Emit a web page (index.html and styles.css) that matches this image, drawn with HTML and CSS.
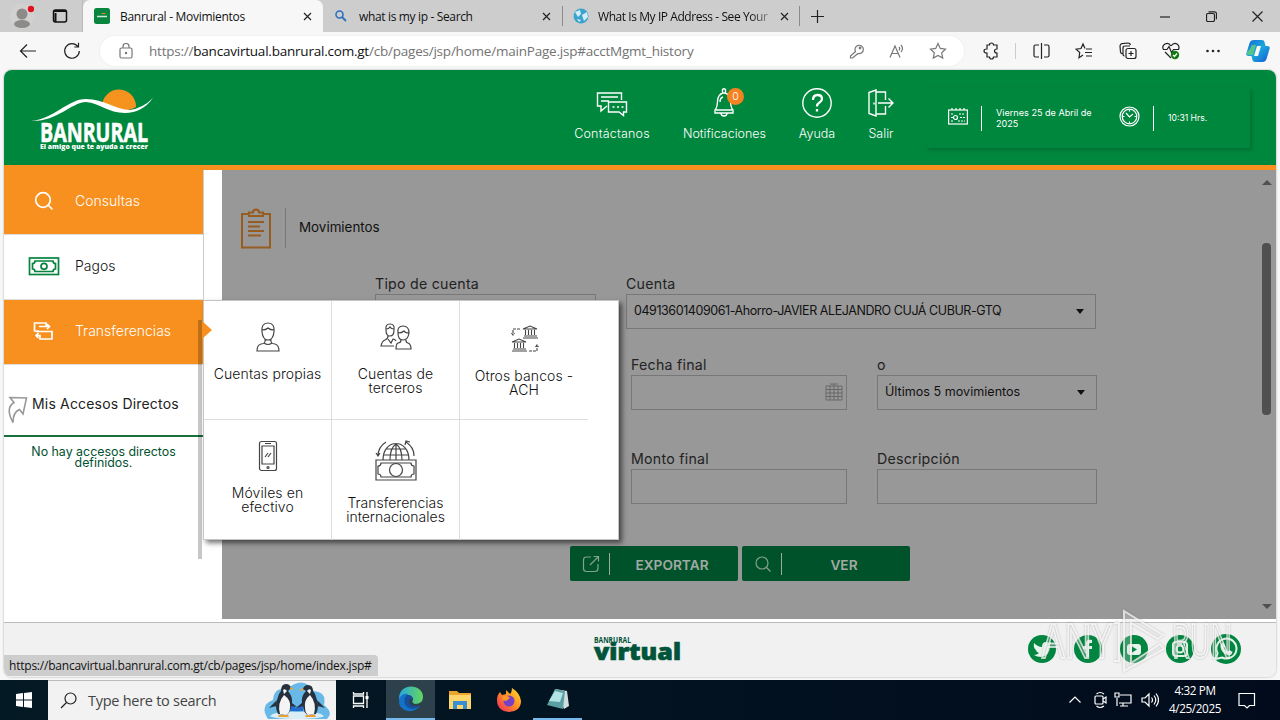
FILE: index.html
```html
<!DOCTYPE html>
<html lang="es">
<head>
    <meta charset="UTF-8">
    <meta name="viewport" content="width=device-width, initial-scale=1.0">
    <title>Banrural - Movimientos</title>
    <link rel="stylesheet" href="styles.css">
</head>
<body>
    <!-- Browser tabs -->
    <div class="tab-strip">
        <div class="tab-tools">
            <svg width="24" height="28" viewBox="0 0 24 28"><circle cx="12" cy="14" r="12" fill="#d3d1cf"/><circle cx="12" cy="12" r="5.5" fill="#8d8b89"/><ellipse cx="12" cy="22" rx="8" ry="4" fill="#8d8b89"/><circle cx="21" cy="7" r="3.2" fill="#e0101c"/></svg>
            <svg width="16" height="16" viewBox="0 0 16 16"><rect x="1.5" y="2" width="13" height="12" rx="2" fill="none" stroke="#111" stroke-width="1.5"/><path d="M2 3h12M3.500 5v9" stroke="#111" stroke-width="2"/></svg>
        </div>
        <div class="tab active">
            <svg width="16" height="16" viewBox="0 0 16 16"><rect width="16" height="16" rx="2.500" fill="#0a8540"/><path d="M7 6a3 2 0 0 1 5 0" fill="#f6921e"/><path d="M3 8.500h10" stroke="#cfe9d9" stroke-width="1.500"/></svg>
            <span class="tab-title">Banrural - Movimientos</span>
            <svg class="close" width="9" height="9" viewBox="0 0 9 9"><path d="M1 1l7 7M8 1l-7 7"/></svg>
        </div>
        <div class="tab second">
            <svg width="16" height="16" viewBox="0 0 16 16"><circle cx="6.500" cy="6.500" r="3.500" fill="none" stroke="#2b6fc0" stroke-width="1.600"/><path d="M9 9l4 4" stroke="#2b6fc0" stroke-width="1.800"/></svg>
            <span class="tab-title">what is my ip - Search</span>
            <svg class="close" width="9" height="9" viewBox="0 0 9 9"><path d="M1 1l7 7M8 1l-7 7"/></svg>
        </div>
        <div class="tab third">
            <svg width="16" height="16" viewBox="0 0 16 16"><circle cx="8" cy="8" r="7.500" fill="#3ba4cc"/><path d="M2 4l5-2 1 4-3 3zM9 7l5-3 1 5-4 4zM4 11l4 1-2 2z" fill="#d5eef5"/></svg>
            <span class="tab-title">What Is My IP Address - See Your</span>
            <svg class="close" width="9" height="9" viewBox="0 0 9 9"><path d="M1 1l7 7M8 1l-7 7"/></svg>
        </div>
        <svg class="new-tab" width="15" height="15" viewBox="0 0 15 15"><path d="M7.500 1v13M1 7.500h13"/></svg>
        <div class="window-buttons">
            <svg width="11" height="11" viewBox="0 0 11 11"><path d="M0 6h10"/></svg>
            <svg width="11" height="11" viewBox="0 0 11 11"><rect x=".5" y="2.500" width="8" height="8" rx="1.500"/><path d="M2.500 .8h6q2 0 2 2v5.500"/></svg>
            <svg width="11" height="11" viewBox="0 0 11 11"><path d="M.5.5l10 10M10.500.5l-10 10"/></svg>
        </div>
    </div>

    <!-- Address bar -->
    <div class="toolbar">
        <svg class="back" width="18" height="18" viewBox="0 0 18 18"><path d="M17 9H2M8 2.500L1.500 9 8 15.500"/></svg>
        <svg class="reload" width="18" height="18" viewBox="0 0 18 18"><path d="M14.800 4.500A7.300 7.300 0 1 0 16.300 9M15.500 .8v4.200h-4.200"/></svg>
        <div class="address">
            <svg width="14" height="16" viewBox="0 0 14 16"><rect x="1" y="5" width="12" height="10" rx="1.500"/><path d="M4 5V3.500a3 3 0 0 1 6 0V5"/><circle cx="7" cy="10" r=".6"/></svg>
            <span class="url">https://<b>bancavirtual.banrural.com.gt</b>/cb/pages/jsp/home/mainPage.jsp#acctMgmt_history</span>
            <div class="address-icons">
                <svg width="16" height="16" viewBox="0 0 16 16"><path d="M6.500 8.500A4.200 4.200 0 1 1 9 10.500L3.500 15H1.500v-2z"/><circle cx="11" cy="5" r=".8"/></svg>
                <svg width="16" height="16" viewBox="0 0 16 16"><path d="M1 14.500L6 3l5 11.500M2.800 10.500h6.400M10 4q1.500 1.500 0 3.500M12 2q3 3.500 0 7"/></svg>
                <svg width="18" height="18" viewBox="0 0 18 18"><path d="M9 1.500l2.300 4.900 5.200.7-3.800 3.700 1 5.300L9 13.500l-4.700 2.600 1-5.300L1.500 7.100l5.200-.7z"/></svg>
            </div>
        </div>
        <div class="tools">
            <svg width="17" height="18" viewBox="0 0 17 18"><path d="M4 3h2.500q0-2 2-2t2 2H14v4q-2.500 0-2.500 2t2.500 2v4h-3.500q0 2-2 2t-2-2H4v-4q-3 0-3-2t3-2z"/></svg>
            <span class="tool-line"></span>
            <svg width="17" height="16" viewBox="0 0 17 16"><path d="M6 2H2.500q-1.500 0-1.500 1.500v9Q1 14 2.500 14H6M11 2h3.500q1.500 0 1.500 1.500v9q0 1.500-1.500 1.500H11M8.500 0v16"/></svg>
            <svg width="18" height="18" viewBox="0 0 18 18"><path d="M10 6.500L8 2 6 6.500l-5 .7L4.700 10.500 4 15.700 8 13M11 7h6M10 10.500h7M11 14h6"/></svg>
            <svg width="18" height="18" viewBox="0 0 18 18"><path d="M4 12q-2 0-2.500-2L1 4q0-2 2-2.300l6-.7q2 0 2.500 2M5.500 14q-1.500 0-1.500-2V6q0-2 2-2h5"/><rect x="7" y="6.500" width="10" height="10" rx="2"/><path d="M12 9v5M9.500 11.500h5"/></svg>
            <svg width="18" height="18" viewBox="0 0 18 18"><path d="M9 4Q6.500 0 3 2T1.500 7.500H5l2-3 2.500 6 2-3h5Q18 4 15 2T9 4M3 10l6 6"/><circle cx="13" cy="13" r="4.200" fill="#107c10" stroke="none"/><path d="M11 13l1.500 1.500L15 11.500" stroke="#fff"/></svg>
            <svg width="16" height="16" viewBox="0 0 16 16"><g fill="#222" stroke="none"><circle cx="2.500" cy="8" r="1.300"/><circle cx="8" cy="8" r="1.300"/><circle cx="13.500" cy="8" r="1.300"/></g></svg>
            <svg width="24" height="24" viewBox="0 0 24 24"><defs><linearGradient id="cop" x2="1" y2="1"><stop stop-color="#1768d8"/><stop offset=".5" stop-color="#1aa8dc"/><stop offset="1" stop-color="#1a56d6"/></linearGradient></defs><path d="M8 1h8q2 0 2.500 2l1 4h2q3 0 2 3l-3 10q-1 3-4 3H9q-2 0-2.500-2l-1-4h-3q-3 0-2-3l3-10Q4.500 1 8 1z" fill="url(#cop)" stroke="none"/><path d="M4 10l2-4h4l-3 10H3q-3 0-2-3z" fill="#54c58a" stroke="none"/><path d="M11 7h4l-3 10H8z" fill="#f7f7f7" stroke="none"/></svg>
        </div>
    </div>

    <!-- Bank page -->
    <div class="page">
        <header>
            <svg class="logo" width="124" height="64" viewBox="0 0 124 64">
                <path d="M71 17a17 17 0 0 1 34 1q-15 8-34-1z" fill="#f6921e"/>
                <path d="M0 32C23 30 37 10 55 10s30 11 44 11q13-2 23-12-11 15-28 15C77 24 69 14 55 13 39 14 26 33 0 32z" fill="#fff"/>
                <text x="9" y="53" class="logo-name" textLength="108" lengthAdjust="spacingAndGlyphs">BANRURAL</text>
                <text x="9" y="60" class="logo-slogan" textLength="108" lengthAdjust="spacingAndGlyphs">El amigo que te ayuda a crecer</text>
            </svg>
            <nav>
                <a class="contact">
                    <svg width="32" height="30" viewBox="0 0 32 30"><path d="M11 18l-6 5v-5H1.500V5h24v7M5 9h17M5 13h8"/><path d="M12.500 14h18v10h-3v3.500L23 24H12.500z"/><path d="M16.500 19h2M21 19h2M25.500 19h2"/></svg>
                    <span>Contáctanos</span>
                </a>
                <a class="notif">
                    <svg width="24" height="30" viewBox="0 0 24 30"><path d="M10.500 5V1.500q1.500-1.500 3 0V5M3 22c3-3 2-8 3-12q2-5 6-5t6 5c1 4 0 9 3 12v3H3zM4 22h16M8 14q0-4 3-5M9 25q0 3 3 3t3-3"/></svg>
                    <span>Notificaciones</span>
                    <em class="badge">0</em>
                </a>
                <a class="help">
                    <svg width="30" height="30" viewBox="0 0 30 30"><circle cx="15" cy="15" r="14.200"/><path d="M11 12q0-5 4.500-5t4.500 4q0 2-2.500 3.500T15 18.500M15 21v2.500" stroke-width="2.300"/></svg>
                    <span>Ayuda</span>
                </a>
                <a class="exit">
                    <svg width="26" height="30" viewBox="0 0 26 30"><path d="M1 4.500l7-2.500v26l-7-2.500zM8 4h9.500v8M17.500 18v8H8M6 14.500v2M10 15h15M20.500 10.500L25 15l-4.500 4.500"/></svg>
                    <span>Salir</span>
                </a>
            </nav>
            <div class="datetime">
                <svg width="20" height="17" viewBox="0 0 20 17"><rect x=".6" y="2" width="18.800" height="14"/><path d="M4 0v3M8 0v3M12 0v3M16 0v3M3 6h3M11 6h6M3 9.500h2M12 9.500h5M3 13h3M10 13h7" stroke-dasharray="2 1"/><circle cx="7.500" cy="9.500" r="2"/></svg>
                <p class="date">Viernes 25 de Abril de 2025</p>
                <svg width="21" height="21" viewBox="0 0 21 21"><circle cx="10.500" cy="10.500" r="9.500"/><circle cx="10.500" cy="10.500" r="7.300"/><path d="M7 7l3.500 4L14 8M10.500 3.500v2M10.500 15.500v2M3.500 10.500h2M15.500 10.500h2"/></svg>
                <p class="time">10:31 Hrs.</p>
            </div>
        </header>

        <div class="content">
            <aside>
                <a class="menu-item on">
                    <svg width="32" height="24" viewBox="0 0 32 24"><circle cx="15" cy="12" r="7.300"/><path d="M20.500 17.500l4 4"/></svg>
                    Consultas
                </a>
                <a class="menu-item pay">
                    <svg width="32" height="24" viewBox="0 0 32 24"><rect x="1.500" y="5" width="29" height="16.500"/><path d="M7 8h18q0 2.500 2.500 2.500v5.500Q25 16 25 18.500H7Q7 16 4.500 16v-5.500Q7 10.500 7 8z"/><circle cx="16" cy="13.300" r="3"/></svg>
                    Pagos
                </a>
                <a class="menu-item on">
                    <svg width="32" height="24" viewBox="0 0 32 24"><path d="M11 13H6.500V5H18v3h3.500M19 6l2.500 2.500L19 11M11 8.500h11M20 13.500h4V21H12v-3.500H8M10.500 15L8 17.500l2.500 2.500M8 13.500h12"/></svg>
                    Transferencias
                </a>
                <div class="shortcuts">
                    <svg width="22" height="28" viewBox="0 0 22 28"><path d="M4 1.500L20.500 2 17 18l-3.500-4.500Q7 16 7 26.500-1 12 8 6.500z"/></svg>
                    <span>Mis Accesos Directos</span>
                </div>
                <p class="no-shortcuts">No hay accesos directos definidos.</p>
                <div class="side-scroll"></div>
            </aside>

            <section class="panel">
                <h1>
                    <svg width="32" height="41" viewBox="0 0 32 41"><path d="M9 6H2v33.500h28V6h-7M9 4.500h4q0-3 3-3t3 3h4V8H9zM8 14h16M8 18.500h12M8 23h16M8 27.500h13"/></svg>
                    <span>Movimientos</span>
                </h1>
                <form>
                    <div class="row first">
                        <div class="field type"><label>Tipo de cuenta</label><div class="box"></div></div>
                        <div class="field account"><label>Cuenta</label><div class="box select">04913601409061-Ahorro-JAVIER ALEJANDRO CUJÁ CUBUR-GTQ</div></div>
                    </div>
                    <div class="row">
                        <div class="field"><label>Fecha final</label>
                            <div class="box">
                                <svg class="calendar" width="18" height="18" viewBox="0 0 18 18"><path d="M1 3h16v14H1zM1 6.500h16M1 10h16M1 13.500h16M5 3v14M9 1v16M13 3v14M5 1h8"/></svg>
                            </div>
                        </div>
                        <div class="field wide"><label>o</label><div class="box select">Últimos 5 movimientos</div></div>
                    </div>
                    <div class="row last">
                        <div class="field"><label>Monto final</label><div class="box"></div></div>
                        <div class="field wide"><label>Descripción</label><div class="box"></div></div>
                    </div>
                    <div class="actions">
                        <button type="button"><svg width="18" height="18" viewBox="0 0 18 18"><path d="M9 2H4.500Q1.500 2 1.500 5v8.500q0 3 3 3H13q3 0 3-3V9M8 10l8-8M11.500 1.500H16.500V6.500"/></svg><span>EXPORTAR</span></button>
                        <button type="button"><svg width="18" height="18" viewBox="0 0 18 18"><circle cx="8" cy="8" r="6"/><path d="M12.500 12.500l4 4"/></svg><span>VER</span></button>
                    </div>
                </form>
                <div class="scrollbar"><i class="up"></i><i class="thumb"></i><i class="down"></i></div>
            </section>

            <div class="submenu">
                <a>
                    <svg width="28" height="32" viewBox="0 0 28 32"><path d="M8 11q-1-9 6-9t6 9q-1 8-6 8t-6-8zM8 9q4 0 6-2 2 2 6 2M11 18q1 5-4 5-4 1-4 7h22q0-6-4-7-5 0-4-5M10 22q4 3 8 0"/></svg>
                    <span>Cuentas propias</span>
                </a>
                <a>
                    <svg width="32" height="32" viewBox="0 0 32 32"><path d="M6 9q-1-6 4-6t4 6q0 6-4 6t-4-6zM6 8q3 0 4-2 1 2 4 2M8 15q0 3-3 4-3 1-4 6h13M8 18l3 4 2-4q2 0 3 2M18 12q-1-7 5-7t6 7q-1 7-6 7t-5-7zM18 12q4 0 6-2 1 2 5 2M21 19q0 3-3 3-2 1-2 6h15q0-5-3-6-2 0-2-3"/></svg>
                    <span>Cuentas de<br>terceros</span>
                </a>
                <a class="banks">
                    <svg width="32" height="32" viewBox="0 0 32 32"><path d="M15 6l7-3 7 3zM15 15h15M16 13h13M17.500 7v5M20.500 7v5M23.500 7v5M26.500 7v5M4 19l7-3 7 3zM4 28h15M5 26h13M6.500 20v5M9.500 20v5M12.500 20v5M15.500 20v5"/><path d="M12 6H5v6M3.500 10L5 12l1.500-2M21 28h8v-6M27.500 24l1.500-2 1.500 2" stroke-dasharray="3 1"/></svg>
                    <span>Otros bancos -<br>ACH</span>
                </a>
                <a>
                    <svg width="20" height="32" viewBox="0 0 20 32"><rect x="1.500" y="1.500" width="17" height="29" rx="2"/><path d="M4 6h12v18H4zM7 3.500h6M7 17l3-4M10 17l3-4"/><circle cx="10" cy="27.500" r="1"/></svg>
                    <span>Móviles en<br>efectivo</span>
                </a>
                <a class="world">
                    <svg width="42" height="42" viewBox="0 0 42 42"><path d="M1 20h40v20H1zM6 23h30q0 3 3 3v8q-3 0-3 3H6q0-3-3-3v-8q3 0 3-3zM8 20C8-2 34-2 34 20M21 3v17M15 20q0-12 6-16 6 4 6 16M8 15h26M11 9h20M11 2Q3 7 3 16M1 13l2 3 2-3M31 2q8 5 8 14M30 5l1-4 4 1"/><circle cx="21" cy="30" r="6.500"/></svg>
                    <span>Transferencias<br>internacionales</span>
                </a>
                <a class="empty"></a>
            </div>
        </div>

        <footer>
            <svg class="virtual" width="90" height="28" viewBox="0 0 90 28">
                <text x="1" y="7" class="virtual-top" textLength="37" lengthAdjust="spacingAndGlyphs">BANRURAL</text>
                <text x="1" y="24" class="virtual-name" textLength="87" lengthAdjust="spacingAndGlyphs">virtual</text>
            </svg>
            <div class="social">
                <svg viewBox="0 0 30 30"><circle cx="15" cy="15" r="14"/><path d="M7 9q4 4 8 4 0-5 4-5 2 0 3 1l2-1-1 3q0 11-9 12-4 0-7-2 3 0 5-2-3-1-3-3-3-2-2-7z" class="glyph"/></svg>
                <svg viewBox="0 0 30 30"><circle cx="15" cy="15" r="14"/><path d="M13 23v-8h-3v-3h3c-1-6 2-7 6-6v3c-3 0-3 0-3 3h3v3h-3v8z" class="glyph"/></svg>
                <svg viewBox="0 0 30 30"><circle cx="15" cy="15" r="14"/><rect x="8" y="10" width="14" height="11" rx="3" class="glyph"/><path d="M13 12.500v6l5-3z"/></svg>
                <svg viewBox="0 0 30 30"><circle cx="15" cy="15" r="14"/><g class="ring"><rect x="8" y="8" width="14" height="14" rx="3"/><circle cx="15" cy="15" r="3.500"/><path d="M19 10.500h1"/></g></svg>
                <svg viewBox="0 0 30 30" class="whatsapp"><circle cx="15" cy="15" r="15"/><path d="M5 25l1.500-6A10 10 0 1 1 11 23.500z" class="ring"/><path d="M10.500 9.500l2-1 2 4-1.500 1.500q1 2.500 4 3.500l1.500-1.500 3 2q-1 4-5 3-6-2-7-8-.5-2 1-3.500z" class="glyph"/></svg>
            </div>
        </footer>
        <div class="status">https://bancavirtual.banrural.com.gt/cb/pages/jsp/home/index.jsp#</div>
    </div>

    <svg class="watermark" width="200" height="64" viewBox="0 0 200 64">
        <text x="1" y="49" textLength="70" lengthAdjust="spacingAndGlyphs">ANY</text>
        <path d="M73 14h5v38h-5M83 2l39 24-5 4-27-16v40l29-19 4 5-40 22z"/>
        <text x="131" y="49" textLength="60" lengthAdjust="spacingAndGlyphs">RUN</text>
    </svg>

    <!-- Windows taskbar -->
    <div class="taskbar">
        <div class="start"><svg width="16" height="16" viewBox="0 0 16 16"><path d="M0 2l7-1v6.500H0zM8 .9L16 0v7.500H8zM0 8.500h7V15l-7-1zM8 8.500h8V16l-8-1z" fill="#fff"/></svg></div>
        <div class="search">
            <svg width="17" height="17" viewBox="0 0 17 17"><circle cx="10.500" cy="6.500" r="5.500"/><path d="M6.500 10.500L1 16"/></svg>
            <span>Type here to search</span>
            <svg class="penguins" width="68" height="38" viewBox="0 0 68 38">
                <path d="M5 37Q-4 23 10 18 11 5 24 7 40-7 51 9q13 1 10 14 10 8 3 14z" fill="#69b9e8"/>
                <path d="M7 34q5-5 27-4 21-1 27 4-4 3-27 3T7 34z" fill="#d9edf7"/>
                <path d="M27 20l6 6 7-6v9H27z" fill="#246bcb"/>
                <path d="M15 32Q11 24 15 15q1-4 3-6 0-7 5-7 4 0 5 4l-3 3q5 6 4 12l5 4-6-1q-1 8-5 9zM14 18l-8 8 7-2zM53 32q4-8 0-17-1-4-3-6 0-6-5-6-4 0-5 4l3 2q-5 5-4 12l-6 5 7-2q1 8 5 9zM54 18l8 8-7-2z" fill="#26313e"/>
                <path d="M17 32q-3-11 4-19 7 5 6 12 0 6-4 8zM51 32q3-11-4-19-6 5-5 12 0 6 3 8zM20 8q2-2 4 1l-3 3zM48 8q-2-2-4 1l3 3z" fill="#f4f4f4"/>
                <path d="M27 5l4 2-4 1zM40 6l-4 2 4 1zM16 33h9l1 2H15zM43 33h9l1 2H42z" fill="#ee9f32"/>
            </svg>
        </div>
        <div class="task-app"><svg width="18" height="18" viewBox="0 0 18 18" fill="none" stroke="#fff" stroke-width="1.300"><path d="M1.500 5h10v7.500h-10zM1.500 1v2h10V1M1.500 17v-2h10v2M15 1v16"/><path d="M15 5v3" stroke-width="3"/></svg></div>
        <div class="task-app current">
            <svg width="26" height="26" viewBox="0 0 26 26"><defs><linearGradient id="edge" x2="1"><stop stop-color="#2aa5df"/><stop offset="1" stop-color="#64d85c"/></linearGradient></defs><path d="M1 12C2-4 25-2 25 11q0 7-8 7-4-1-2-4 0-5-6-5-5 0-8 5z" fill="url(#edge)"/><path d="M1 13q3-6 9-5-4 4-1 9 4 6 13 3-5 6-12 5Q0 23 1 13z" fill="#1473c9"/><path d="M9 9q5 0 6 4-4-1-4 3 2 6 11 4-8 6-14 0-4-6 1-11z" fill="#164f9e"/></svg>
        </div>
        <div class="task-app"><svg width="24" height="22" viewBox="0 0 24 22"><path d="M1 2h8l2 2h12v16H1z" fill="#e9a52c"/><path d="M1 6h22v14H1z" fill="#fdd66b"/><path d="M5 20v-8h14v8h-4v-4H9v4z" fill="#3a8fd1"/></svg></div>
        <div class="task-app"><svg width="26" height="26" viewBox="0 0 26 26"><defs><linearGradient id="fox" x1="1" x2="0" y2="1"><stop stop-color="#ffe32e"/><stop offset=".5" stop-color="#ff8a25"/><stop offset="1" stop-color="#ee2368"/></linearGradient></defs><path d="M4 5l2 3 4-1V3l4 4q2-2 2-6 8 5 9 13 0 10-12 11Q1 24 1 13q0-5 3-8z" fill="url(#fox)"/><circle cx="13" cy="14" r="5.500" fill="#7841c5"/><path d="M7 9q5-1 7 2l-4 3-4-1z" fill="#ff9629"/></svg></div>
        <div class="task-app opened"><svg width="24" height="24" viewBox="0 0 24 24"><path d="M9 2l12 2 2 15-5 3z" fill="#d2dede"/><path d="M9 2l10 2-2 18-16-4z" fill="#5b9fa5"/><path d="M9 4l8 2-3 9-11-1z" fill="#b4e3e6"/></svg></div>
        <div class="tray">
            <svg width="14" height="14" viewBox="0 0 14 14"><path d="M1.500 9.500L7 4l5.500 5.500"/></svg>
            <svg width="14" height="18" viewBox="0 0 14 18"><rect x="1" y="5" width="8" height="8" rx="1"/><path d="M9 8l3-2v6l-3-2M2.500 3Q6 0 10 3M2.500 15q3.500 3 7.500 0"/></svg>
            <svg width="18" height="16" viewBox="0 0 18 16"><path d="M6 3h11v8H5M9 11v3M6 14h8M3 6v8M1 1h4v4H1z"/></svg>
            <svg width="18" height="16" viewBox="0 0 18 16"><path d="M1 6h3l4-4v12l-4-4H1zM10.500 5.500q2 2.500 0 5M13 3.500q3.500 4.500 0 9M15 1.500q5 6.500 0 13"/></svg>
        </div>
        <div class="clock">4:32 PM<br>4/25/2025</div>
        <svg class="notice" width="18" height="18" viewBox="0 0 18 18"><path d="M1 1.500h15.500v12h-5L9 16l-2.500-2.500H1z"/></svg>
    </div>
</body>
</html>
```
FILE: styles.css
```css
* {
    margin: 0;
    padding: 0;
    box-sizing: border-box;
}
body {
    width: 1280px;
    height: 720px;
    overflow: hidden;
    position: relative;
    background: #f7f7f7;
    font-family: "Open Sans", "Noto Sans", sans-serif;
    font-size: 12px;
    color: #111;
}
svg {
    flex: none;
    display: block;
}

/* Browser */
.tab-strip {
    height: 32px;
    display: flex;
    align-items: center;
    background: #cdcdcd;
}
.tab-tools {
    width: 83px;
    height: 32px;
    display: flex;
    align-items: center;
    gap: 18px;
    padding-left: 10px;
    border-right: 1px solid #bbb;
}
.tab {
    width: 240px;
    height: 32px;
    display: flex;
    align-items: center;
    padding: 0 11px;
}
.tab.active {
    background: #f7f7f7;
    border-radius: 7px 7px 0 0;
}
.tab.second {
    padding: 0 12px 0 10px;
}
.tab.third {
    width: 238px;
    border-left: 1px solid #8b8b8b;
    border-right: 1px solid #8b8b8b;
    margin-left: -1px;
    height: 20px;
    padding: 0 10px;
}
.tab-title {
    flex: 1;
    margin: 0 16px 0 10px;
    white-space: nowrap;
    letter-spacing: -0.29px;
}
.second .tab-title {
    letter-spacing: -.35px;
}
.third .tab-title {
    margin: 0 10px 0 9px;
    letter-spacing: -.43px;
    mask-image: linear-gradient(90deg, #000 88%, rgba(0, 0, 0, .3));
}
.close, .new-tab, .window-buttons svg {
    fill: none;
    stroke: #222;
    stroke-width: 1.2;
}
.new-tab {
    margin-left: 10px;
}
.window-buttons {
    display: flex;
    gap: 35px;
    margin-left: auto;
    padding-right: 17px;
}
.toolbar {
    height: 38px;
    display: flex;
    align-items: center;
    padding-left: 19px;
}
.toolbar svg {
    fill: none;
    stroke: #222;
    stroke-width: 1.2;
}
.reload {
    margin: 0 19px 0 26px;
}
.address {
    width: 864px;
    height: 30px;
    display: flex;
    align-items: center;
    background: #fff;
    border-radius: 15px;
    padding: 0 17px 0 19px;
    box-shadow: 0 0 1px 1px #f1f1f1;
}
.toolbar .address svg {
    stroke: #777;
}
.url {
    margin-left: 16px;
    color: #737373;
    font-size: 13.5px;
    letter-spacing: -.22px;
    white-space: nowrap;
}
.url b {
    color: #111;
    font-weight: 400;
}
.address-icons {
    margin-left: auto;
    display: flex;
    align-items: center;
    gap: 24px;
}
.tools {
    display: flex;
    align-items: center;
    flex: 1;
    justify-content: space-between;
    padding: 0 10px 0 19px;
}
.tool-line {
    width: 1px;
    height: 16px;
    margin: 0 -8px 0 -10px;
    background: #ccc;
}

/* Page header */
.page {
    position: relative;
    width: 1272px;
    height: 607px;
    margin-left: 4px;
    border-radius: 8px;
    overflow: hidden;
    background: #fff;
    font-family: Inter, "Open Sans", sans-serif;
    box-shadow: 0 0 2px #999;
}
header {
    height: 100px;
    background: #00873e;
    border-bottom: 5px solid #f7901e;
    display: flex;
    align-items: flex-start;
}
.logo {
    margin: 19px 0 0 27px;
}
.logo text {
    fill: #fff;
}
.logo-name {
    font: bold 26px "Open Sans";
    stroke: #fff;
    stroke-width: .6;
}
.logo-slogan {
    font: 800 7.5px "Open Sans";
}
nav {
    display: flex;
    gap: 33px;
    margin: 18px 0 0 419px;
}
nav a {
    display: flex;
    flex-direction: column;
    align-items: center;
    position: relative;
    color: #fff;
    font-size: 12.5px;
    font-weight: 300;
    line-height: 18px;
}
nav a svg, .datetime svg {
    fill: none;
    stroke: #fff;
    stroke-width: 1.4;
}
nav a span {
    margin-top: 7px;
}
.contact {
    width: 76px;
    letter-spacing: .2px;
}
.notif {
    width: 83px;
}
.notif svg {
    margin-left: -2px;
}
.help {
    width: 36px;
}
.help svg {
    margin-left: -1px;
}
.exit {
    width: 26px;
}
.badge {
    position: absolute;
    left: 44px;
    top: 0;
    width: 17px;
    height: 17px;
    border-radius: 50%;
    background: #f58220;
    font-size: 10.5px;
    font-style: normal;
    line-height: 17px;
    text-align: center;
}
.datetime {
    width: 324px;
    height: 60px;
    margin: 18px 0 0 32px;
    display: flex;
    align-items: center;
    padding-left: 22px;
    box-shadow: 2px 2px 4px #006f32;
    color: #fff;
    line-height: 11px;
}
.datetime svg {
    margin-top: -3px;
    stroke-width: 1.2;
}
.datetime p {
    height: 25px;
    display: flex;
    align-items: center;
    border-left: 1px solid #fff;
    margin-left: 13px;
    padding-left: 14px;
}
.datetime .date {
    width: 126px;
    margin-right: 12px;
    font-size: 9.1px;
}
.datetime .time {
    font-size: 8.6px;
}

/* Side menu */
.content {
    position: relative;
    height: 449px;
    display: flex;
}
aside {
    position: relative;
    width: 200px;
    border-right: 1px solid #ccc;
    height: 370px;
}
.menu-item {
    height: 65px;
    display: flex;
    align-items: center;
    gap: 15px;
    padding: 0 0 4px 24px;
    border-bottom: 1px solid #ddd;
    font-size: 14px;
    font-weight: 300;
}
.menu-item svg {
    fill: none;
    stroke: #fff;
    stroke-width: 1.7;
}
.menu-item.on {
    background: #f7901e;
    color: #fff;
}
.menu-item.pay svg {
    stroke: #07833d;
}
.shortcuts {
    height: 72px;
    display: flex;
    align-items: center;
    gap: 4px;
    padding: 6px 0 0 2px;
    border-bottom: 2px solid #18713d;
    font-size: 14px;
    letter-spacing: .18px;
    color: #222;
    white-space: nowrap;
}
.shortcuts svg {
    margin-top: 14px;
    fill: none;
    stroke: #999;
    stroke-width: 1.6;
}
.no-shortcuts {
    padding: 9px 20px 0;
    text-align: center;
    font-size: 12.4px;
    line-height: 11px;
    color: #00522e;
}
.side-scroll {
    position: absolute;
    right: 1px;
    top: 150px;
    width: 4px;
    height: 239px;
    background: rgba(0, 0, 0, .22);
}

/* Account form */
.panel {
    position: relative;
    width: 1054px;
    height: 449px;
    margin-left: 18px;
    background: #989898;
    padding-top: 38px;
}
h1 {
    height: 40px;
    display: flex;
    padding-left: 19px;
    font-size: 13.4px;
    font-weight: 400;
    line-height: 38px;
}
h1 span {
    margin-left: 12px;
    padding-left: 13px;
    border-left: 1px solid #777;
}
h1 svg {
    margin-left: -1px;
    margin-right: 1px;
    fill: none;
    stroke: #965c20;
    stroke-width: 2;
}
.row {
    display: flex;
    gap: 30px;
    margin: 26px 0 0 409px;
}
.row.first {
    margin-left: 153px;
}
.row.last {
    margin-top: 39px;
}
.field {
    width: 216px;
}
.field.wide {
    width: 220px;
}
.field.type {
    width: 221px;
}
.field.account {
    width: 470px;
}
label {
    display: block;
    height: 20px;
    font-size: 14.2px;
    line-height: 19px;
    letter-spacing: .25px;
    color: #222;
}
.box {
    height: 35px;
    border: 1px solid #777;
    position: relative;
    padding-left: 7px;
    font-size: 12.6px;
    line-height: 32px;
    white-space: nowrap;
}
.account .box {
    font-size: 12.5px;
    letter-spacing: -.43px;
}
.select::after {
    content: "";
    position: absolute;
    right: 11px;
    top: 14px;
    border: 4px solid transparent;
    border-top: 5px solid #111;
}
.calendar {
    position: absolute;
    right: 3px;
    top: 7px;
    fill: none;
    stroke: #686868;
}
.actions {
    display: flex;
    gap: 4px;
    margin: 42px 0 0 348px;
}
button {
    width: 168px;
    height: 35px;
    display: flex;
    align-items: center;
    padding-left: 12px;
    border: 0;
    border-radius: 2px;
    background: #00522a;
    color: #a0aaa3;
    font: 600 13.7px Inter;
}
button svg {
    fill: none;
    stroke: #83a18e;
    stroke-width: 1.2;
}
button span {
    flex: 1;
    height: 22px;
    line-height: 25px;
    margin-left: 9px;
    padding-right: 4px;
    border-left: 1px solid #a0aaa3;
}
.scrollbar {
    position: absolute;
    right: 5px;
    top: 10px;
    height: 429px;
    width: 9px;
}
.scrollbar i {
    position: absolute;
    border: 5px solid transparent;
}
.scrollbar .up {
    top: -5px;
    border-bottom-color: #505050;
}
.scrollbar .thumb {
    top: 63px;
    width: 9px;
    height: 172px;
    border: 0;
    border-radius: 4px;
    background: #505050;
}
.scrollbar .down {
    bottom: -5px;
    border-top-color: #505050;
}

/* Transfer submenu */
.submenu {
    position: absolute;
    left: 199px;
    top: 130px;
    width: 416px;
    height: 240px;
    display: grid;
    grid-template-columns: 128px 128px 128px;
    grid-template-rows: 119px 120px;
    background: #fff;
    border: 1px solid #c5c5c5;
    box-shadow: 3px 3px 5px rgba(0, 0, 0, .55);
}
.submenu::before {
    content: "";
    position: absolute;
    left: -2px;
    top: 20px;
    border: 9px solid transparent;
    border-left: 10px solid #f7901e;
}
.submenu a {
    display: flex;
    flex-direction: column;
    align-items: center;
    padding-top: 20px;
    border-right: 1px solid #ddd;
    border-bottom: 1px solid #ddd;
    text-align: center;
    font-size: 14px;
    font-weight: 350;
    line-height: 14px;
}
.submenu a:nth-child(3n) {
    border-right: 0;
}
.submenu a:nth-child(n+4) {
    border-bottom: 0;
}
.submenu a span {
    margin-top: 14px;
    letter-spacing: .1px;
    white-space: nowrap;
}
.submenu svg {
    fill: none;
    stroke: #444;
    stroke-width: 1.2;
}
.submenu .banks {
    padding-top: 22px;
}
.submenu .banks svg {
    stroke-width: 1.1;
}
.submenu .world span {
    margin-top: 14px;
    letter-spacing: 0;
}

/* Footer */
footer {
    height: 55px;
    margin-top: 3px;
    display: flex;
    align-items: flex-start;
    border-top: 1px solid #bbb;
    background: #f1f1f1;
}
.virtual {
    margin: 13px 0 0 589px;
}
.virtual text {
    fill: #00543a;
}
.virtual-top {
    font: bold 8px "Open Sans";
}
.virtual-name {
    font: 800 23px "Open Sans";
    stroke: #00543a;
    stroke-width: .7;
}
.social {
    display: flex;
    gap: 16px;
    margin: 11px 0 0 344px;
}
.social svg {
    width: 30px;
    height: 30px;
    fill: #008640;
}
.social .glyph {
    fill: #e7f4ec;
}
.social .ring {
    fill: none;
    stroke: #e7f4ec;
    stroke-width: 2;
}
.status {
    position: absolute;
    left: 0;
    bottom: 1px;
    width: 374px;
    height: 21px;
    padding-left: 5px;
    background: #cdcdcd;
    border-radius: 0 4px 0 0;
    font: 12px/21px "Open Sans";
    letter-spacing: -.22px;
    white-space: nowrap;
}
.watermark {
    position: absolute;
    left: 1041px;
    top: 609px;
    fill: rgba(255, 255, 255, .2);
    stroke: rgba(255, 255, 255, .7);
    stroke-width: 2;
    filter: drop-shadow(0 0 1px rgba(90, 90, 90, .45));
}
.watermark text {
    font: 48px "Open Sans";
}

/* Taskbar */
.taskbar {
    height: 40px;
    margin-top: 3px;
    display: flex;
    background: linear-gradient(90deg, #031923, #031321 50%, #010b1c);
    color: #fff;
}
.start, .task-app {
    width: 48px;
    height: 40px;
    display: flex;
    align-items: center;
    justify-content: center;
}
.task-app {
    width: 49px;
}
.search {
    width: 288px;
    display: flex;
    align-items: center;
    padding-left: 12px;
    background: #f2f2f2;
    border-top: 1px solid #bbb;
    color: #444;
    font-size: 14.5px;
}
.search svg {
    fill: none;
    stroke: #222;
    stroke-width: 1.2;
}
.search span {
    margin-left: 11px;
    letter-spacing: -.27px;
    white-space: nowrap;
}
.search .penguins {
    margin: 0 5px 0 auto;
    stroke: none;
}
.current {
    margin-left: 1px;
    background: #2c414b;
}
.current, .opened {
    border-bottom: 2px solid #76b9ed;
}
.tray {
    margin-left: auto;
    display: flex;
    align-items: center;
    gap: 9px;
}
.tray svg, .notice {
    fill: none;
    stroke: #fff;
    stroke-width: 1.2;
}
.tray svg:nth-child(2) {
    margin: 0 -3px 0 3px;
}
.clock {
    width: 70px;
    margin-left: 1px;
    padding-top: 1px;
    text-align: center;
    font-size: 11.7px;
    line-height: 18px;
    letter-spacing: -.35px;
}
.notice {
    margin: 12px 24px 0 8px;
}
```
